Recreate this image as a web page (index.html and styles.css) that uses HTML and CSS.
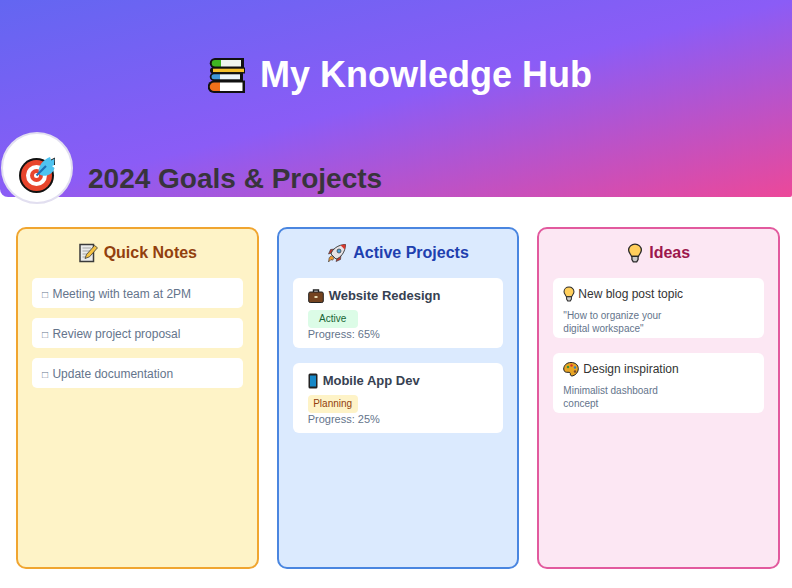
FILE: index.html
```html
<!DOCTYPE html>
<html lang="en">
<head>
    <meta charset="UTF-8">
    <meta name="viewport" content="width=device-width, initial-scale=1.0">
    <title>My Knowledge Hub</title>
    <link rel="stylesheet" href="styles.css">
</head>
<body>
    <!-- shared icons -->
    <svg class="icon-defs" aria-hidden="true">
        <symbol id="bulb" viewBox="0 0 20 26">
            <path d="M10 1.500c-4.600 0-8.300 3.400-8.300 7.700 0 3.500 2.800 5.300 3.800 8.300h9c1-3 3.800-4.800 3.800-8.300 0-4.300-3.700-7.700-8.300-7.700z" fill="#ffcf5c" stroke="#2a2a2a" stroke-width="1.700"/>
            <path d="M6 17.500h8v4l-1.800 3h-4.400L6 21.500z" fill="#c9c9c9" stroke="#2a2a2a" stroke-width="1.700"/>
        </symbol>
    </svg>

    <!-- hero -->
    <header class="hero">
        <h1 class="hero-title">
            <svg class="books-icon" viewBox="0 0 37 35">
                <path d="M7 0h29v10.500H7A5.250 5.250 0 0 1 7 0z" fill="#111"/>
                <path d="M7 2h6v6.500H7A3.250 3.250 0 0 1 7 2z" fill="#3fb521"/>
                <path d="M13 2h20v6.500H13z" fill="#f0f6ee"/>
                <path d="M5 9.500h32v6H5a3 3 0 0 1 0-6z" fill="#111"/>
                <path d="M5 10.700h31v3.400H5z" fill="#f5c02c"/>
                <path d="M6 14.500h29v8.500H6a4.250 4.250 0 0 1 0-8.500z" fill="#111"/>
                <path d="M6 16.300h6v5H6a2.500 2.500 0 0 1 0-5z" fill="#3f97d8"/>
                <path d="M12 16.300h20v5H12z" fill="#eef6fb"/>
                <path d="M6 22.500h31V35H6a6.250 6.250 0 0 1 0-12.500z" fill="#111"/>
                <path d="M6 24.500h6V33H6a4.250 4.250 0 0 1 0-8.500z" fill="#f0701a"/>
                <path d="M12 24.500h22.500V33H12z" fill="#fff"/>
            </svg>
            My Knowledge Hub
        </h1>
        <div class="avatar">
            <svg class="target-icon" viewBox="0 0 36 36">
                <circle cx="17.500" cy="18.500" r="17.500" fill="#111"/>
                <circle cx="17.500" cy="18.500" r="15.500" fill="#e8452c"/>
                <circle cx="17.500" cy="18.500" r="10.500" fill="#fff"/>
                <circle cx="17.500" cy="18.500" r="6.500" fill="#e8452c"/>
                <circle cx="17.500" cy="18.500" r="2.500" fill="#fff"/>
                <path d="M20 17C18 9 25 2 31 0l1 3 4-2-.5 7-2.500 1 2.500 2c-1.500 7-10.500 10-15.500 6z" fill="#4fc3f0"/>
                <path d="M32 3l4-2-.5 7" fill="none" stroke="#222"/>
                <path d="M17.500 18.500L27 9" stroke="#1c6fb5" stroke-width="2.200"/>
            </svg>
        </div>
        <h2 class="hero-sub">2024 Goals &amp; Projects</h2>
    </header>

    <!-- columns -->
    <main class="columns">
        <section class="column column-notes">
            <h3 class="column-title">
                <svg class="title-icon" viewBox="0 0 20 20">
                    <path d="M2 1.500h13.500v17H2z" fill="#ebebeb" stroke="#3a3a3a" stroke-width="1.500"/>
                    <path d="M4.500 5h8.500M4.500 8h8.500M4.500 11h6M4.500 14h4" stroke="#bdbdbd" stroke-width="1.300"/>
                    <path d="M7 15.500l1.500-4L16.500 2.500l3 2.300-8 9z" fill="#f5c242" stroke="#3a3a3a" stroke-width="0.800"/>
                </svg>
                Quick Notes
            </h3>
            <div class="note"><span class="note-box">&#9633;</span> Meeting with team at 2PM</div>
            <div class="note"><span class="note-box">&#9633;</span> Review project proposal</div>
            <div class="note"><span class="note-box">&#9633;</span> Update documentation</div>
        </section>

        <section class="column column-projects">
            <h3 class="column-title">
                <svg class="title-icon" viewBox="0 0 20 20">
                    <path d="M4.500 10L1.500 11l2-4.500 4.500-.5zM10 15.500L9 18.500l4.500-2 .5-4.500z" fill="#c9362c" stroke="#333" stroke-width="0.600"/>
                    <path d="M4 16.500l-2.500 2.500.7-4.300 2.300-2 2.500 2.500-1.500 2z" fill="#f29a2e" stroke="#333" stroke-width="0.600"/>
                    <path d="M4 11C5 6.500 11 1.500 18.500 1.500 18.500 9 13.500 15 9 16z" fill="#e6e3e6" stroke="#333" stroke-width="0.900"/>
                    <path d="M13.500 2.300c1.500-.6 3.300-.8 5-.8 0 1.700-.2 3.500-.8 5z" fill="#d9372c"/>
                    <circle cx="12" cy="8" r="2" fill="#4aa3df" stroke="#333" stroke-width="0.700"/>
                </svg>
                Active Projects
            </h3>
            <div class="project">
                <div class="project-name">
                    <svg class="item-icon" viewBox="0 0 16 16">
                        <path d="M5.500 4V2h5v2" fill="none" stroke="#222" stroke-width="1.400"/>
                        <rect x="0.700" y="4" width="14.600" height="10.500" rx="1.500" fill="#74431f" stroke="#222"/>
                        <rect x="6.500" y="8" width="3" height="2" fill="#e8d9b0"/>
                    </svg>
                    Website Redesign
                </div>
                <span class="badge badge-active">Active</span>
                <div class="project-progress">Progress: 65%</div>
            </div>
            <div class="project">
                <div class="project-name">
                    <svg class="item-icon item-icon-phone" viewBox="0 0 10 16">
                        <rect x="0.500" y="0.500" width="9" height="15" rx="1.500" fill="#222"/>
                        <rect x="2" y="2.500" width="6" height="11" fill="#1688c8"/>
                    </svg>
                    Mobile App Dev
                </div>
                <span class="badge badge-planning">Planning</span>
                <div class="project-progress">Progress: 25%</div>
            </div>
        </section>

        <section class="column column-ideas">
            <h3 class="column-title">
                <svg class="title-icon title-icon-bulb"><use href="#bulb"/></svg>
                Ideas
            </h3>
            <div class="idea">
                <div class="idea-name idea-name-tight">
                    <svg class="item-icon item-icon-bulb"><use href="#bulb"/></svg>
                    New blog post topic
                </div>
                <p class="idea-text">"How to organize your<br>digital workspace"</p>
            </div>
            <div class="idea">
                <div class="idea-name">
                    <svg class="item-icon" viewBox="0 0 16 16">
                        <path d="M8 1.500C3.500 1.500.7 4.500.7 8c0 3 2.500 3.500 4.300 3.300 2-.2 2.500.7 2.300 1.700-.2 1.500 1 2.300 2.700 1.800 3-1 5.300-3.800 5.300-7C15.300 3.800 12.300 1.500 8 1.500z" fill="#e8a524" stroke="#222"/>
                        <circle cx="5" cy="6" r="1.200" fill="#3a8f3a"/>
                        <circle cx="8.500" cy="4.500" r="1.200" fill="#d9372c"/>
                        <circle cx="12" cy="6.500" r="1.200" fill="#2f7fc4"/>
                        <circle cx="12" cy="10.500" r="1.200" fill="#7a4a2b"/>
                    </svg>
                    Design inspiration
                </div>
                <p class="idea-text">Minimalist dashboard<br>concept</p>
            </div>
        </section>
    </main>
</body>
</html>
```

FILE: styles.css
```css
/* page */
body {
    margin: 0;
    font-family: "Liberation Sans", Arial, sans-serif;
    background: #fff;
    overflow: hidden;
}
.icon-defs {
    display: none;
}

/* hero */
.hero {
    position: relative;
    height: 197px;
    background: linear-gradient(to bottom right, #6366f1 0%, #8b5cf6 50%, #ec4899 100%);
    border-radius: 0 0 2px 8px;
}
.hero-title {
    display: flex;
    justify-content: center;
    align-items: center;
    gap: 15px;
    margin: 0;
    padding: 54px 0 0 8px;
    font-size: 36px;
    line-height: 42px;
    font-weight: bold;
    color: #fff;
}
.books-icon {
    width: 37px;
    height: 35px;
}
.avatar {
    position: absolute;
    left: 1px;
    top: 132px;
    display: flex;
    justify-content: center;
    box-sizing: border-box;
    width: 72px;
    height: 72px;
    padding: 23px 0 0 0;
    background: #fff;
    border: 2px solid #e2dff0;
    border-radius: 50%;
}
.target-icon {
    width: 36px;
    height: 36px;
}
.hero-sub {
    position: absolute;
    left: 88px;
    top: 163px;
    margin: 0;
    font-size: 28px;
    line-height: 32px;
    font-weight: bold;
    color: #38343c;
}

/* columns */
.columns {
    display: grid;
    grid-template-columns: repeat(3, 1fr);
    gap: 18px;
    padding: 30px 12px 0 16px;
}
.column {
    box-sizing: border-box;
    height: 342px;
    padding: 14px;
    border: 2px solid;
    border-radius: 10px;
}
.column-notes {
    background: #fef3c7;
    border-color: #f0a530;
    color: #92400e;
}
.column-projects {
    background: #dbeafe;
    border-color: #4a86e0;
    color: #1e40af;
}
.column-ideas {
    background: #fce7f3;
    border-color: #e25a9e;
    color: #9d174d;
}
.column-title {
    display: flex;
    justify-content: center;
    align-items: center;
    gap: 6px;
    margin: 0 0 15px;
    font-size: 16px;
    line-height: 18px;
    font-weight: bold;
}
.title-icon {
    width: 20px;
    height: 20px;
}
.title-icon-bulb {
    width: 16px;
}

/* quick notes */
.note {
    margin-bottom: 10px;
    padding: 9px 10px 7px;
    background: #fff;
    border-radius: 5px;
    font-size: 12px;
    line-height: 14px;
    color: #64748b;
}
.note-box {
    margin-right: 1px;
    font-size: 10px;
    line-height: 0;
}

/* projects */
.project {
    box-sizing: border-box;
    height: 70px;
    margin-bottom: 15px;
    padding: 10px 15px;
    background: #fff;
    border-radius: 6px;
    color: #374151;
}
.project-name {
    display: flex;
    align-items: center;
    gap: 5px;
    margin-bottom: 6px;
    font-size: 13px;
    line-height: 16px;
    font-weight: bold;
}
.item-icon {
    width: 16px;
    height: 16px;
}
.item-icon-phone {
    width: 10px;
}
.item-icon-bulb {
    width: 12px;
}
.badge {
    display: block;
    width: 50px;
    height: 18px;
    border-radius: 4px;
    font-size: 10px;
    line-height: 18px;
    text-align: center;
}
.badge-active {
    background: #dcfce7;
    color: #166534;
}
.badge-planning {
    background: #fef3c7;
    color: #92400e;
}
.project-progress {
    font-size: 11px;
    line-height: 12px;
    color: #64748b;
}

/* ideas */
.idea {
    box-sizing: border-box;
    height: 60px;
    margin-bottom: 15px;
    padding: 8px 10px;
    background: #fff;
    border-radius: 6px;
}
.idea-name {
    display: flex;
    align-items: center;
    gap: 4px;
    margin-bottom: 7px;
    font-size: 12px;
    line-height: 16px;
    color: #333;
}
.idea-name-tight {
    gap: 3px;
}
.idea-text {
    margin: 0;
    font-size: 10px;
    line-height: 13px;
    color: #64748b;
}
```
